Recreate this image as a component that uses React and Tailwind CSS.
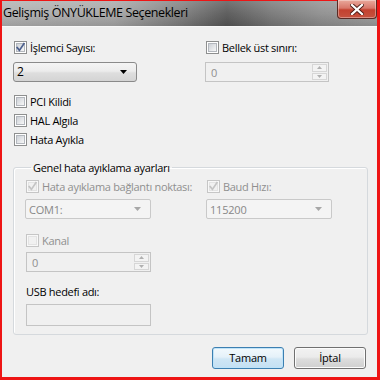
import React from "react";

const FONT = "font-['Open_Sans','Noto_Sans',sans-serif]";

function Check({ checked, disabled }) {
  return (
    <span
      className={
        disabled
          ? "flex w-[13px] h-[13px] shrink-0 items-center justify-center border border-[#c6c6c6] bg-[#f8f8f8]"
          : "flex w-[13px] h-[13px] shrink-0 items-center justify-center border border-[#8e8f8f] bg-white"
      }
    >
      <span
        className={
          disabled
            ? "relative flex w-[9px] h-[9px] border border-[#e3e3e3] bg-[#f1f1f1]"
            : "relative flex w-[9px] h-[9px] border border-[#b3b7bd] bg-[linear-gradient(135deg,#cdd1d7,#f7f7f7)]"
        }
      >
        {checked && (
          <svg
            width="11"
            height="11"
            viewBox="0 0 11 11"
            className="absolute left-[-2px] top-[-2px]"
          >
            <path
              d="M2.2 5.6 L4.4 8.4 L8.9 1.8"
              fill="none"
              stroke={disabled ? "#c4c4c4" : "#4b5f8d"}
              strokeWidth="1.7"
              strokeLinecap="square"
            />
          </svg>
        )}
      </span>
    </span>
  );
}

function CheckRow({ label, checked, disabled }) {
  return (
    <div className="flex h-[14px] items-center">
      <span className="ml-px">
        <Check checked={checked} disabled={disabled} />
      </span>
      <span
        className={
          disabled
            ? "ml-[3px] whitespace-nowrap text-[11px] leading-none tracking-[-0.3px] text-[#8f8f8f]"
            : "ml-[3px] whitespace-nowrap text-[11px] leading-none tracking-[-0.3px] text-black"
        }
      >
        {label}
      </span>
    </div>
  );
}

function Arrow({ disabled }) {
  return (
    <svg width="7" height="4" viewBox="0 0 7 4">
      <path d="M0 0 H7 L3.5 4 Z" fill={disabled ? "#a7a7a7" : "#000"} />
    </svg>
  );
}

function Combo({ value, disabled, width }) {
  return (
    <div
      className={
        disabled
          ? "flex h-[20px] items-center justify-between rounded-[2px] border border-[#c9c9c9] bg-[#f4f4f4] pl-[3px] pr-[9px] " + width
          : "flex h-[20px] items-center justify-between rounded-[3px] border border-[#8a8a8a] bg-[linear-gradient(#f4f4f4_0%,#ececec_45%,#dedede_55%,#d4d4d4_100%)] pl-[3px] pr-[9px] " + width
      }
    >
      <span
        className={
          disabled
            ? "text-[11px] leading-none tracking-[-0.2px] text-[#888888]"
            : "text-[12px] leading-none text-black"
        }
      >
        {value}
      </span>
      <Arrow disabled={disabled} />
    </div>
  );
}

function Spin({ width }) {
  return (
    <div
      className={
        "flex h-[20px] items-stretch border border-[#c4c4c4] bg-[#f0f0f0] " +
        width
      }
    >
      <div className="flex flex-1 items-center pl-[5px] text-[11px] leading-none text-[#8f8f8f]">
        0
      </div>
      <div className="flex w-[16px] flex-col gap-px py-px pr-px">
        <div className="flex flex-1 items-center justify-center border border-[#d6d6d6] bg-[#f3f3f3]">
          <svg width="5" height="3" viewBox="0 0 5 3">
            <path d="M0 3 L2.5 0 L5 3 Z" fill="#b0b0b0" />
          </svg>
        </div>
        <div className="flex flex-1 items-center justify-center border border-[#d6d6d6] bg-[#f3f3f3]">
          <svg width="5" height="3" viewBox="0 0 5 3">
            <path d="M0 0 L5 0 L2.5 3 Z" fill="#b0b0b0" />
          </svg>
        </div>
      </div>
    </div>
  );
}

function Button({ label, primary }) {
  return (
    <div
      className={
        primary
          ? "flex h-[22px] w-[72px] items-center justify-center rounded-[3px] border border-[#3c7fb1] bg-[linear-gradient(#f2f9fd_0%,#e5f1f9_45%,#cfe6f5_55%,#c4e0f3_100%)] shadow-[inset_0_0_0_1px_#bfe3f8] text-[11px] tracking-[-0.2px] text-black"
          : "flex h-[22px] w-[72px] items-center justify-center rounded-[3px] border border-[#707070] bg-[linear-gradient(#f2f2f2_0%,#ebebeb_45%,#dddddd_55%,#cfcfcf_100%)] shadow-[inset_0_0_0_1px_#fcfcfc] text-[11px] tracking-[-0.2px] text-black"
      }
    >
      {label}
    </div>
  );
}

export default function App() {
  return (
    <div
      className={
        "flex h-[380px] w-[380px] flex-col bg-[#ee1515] pt-px pl-[2px] pr-[3px] pb-[3px] " +
        FONT
      }
    >
      {/* Title bar */}
      <div className="relative flex h-[25px] shrink-0 items-center bg-[linear-gradient(90deg,#b0b0b0_0%,#a6a6a6_30%,#7c7c7c_48%,#575757_60%,#777777_72%,#8e8e8e_85%,#9c9c9c_100%)] pl-px">
        <div className="absolute inset-0 bg-[linear-gradient(180deg,rgba(255,255,255,0.18)_0%,rgba(255,255,255,0.05)_50%,rgba(0,0,0,0.1)_100%)]" />
        <span className="relative whitespace-nowrap text-[12.5px] leading-none tracking-[-0.4px] text-black">
          Gelişmiş ÖNYÜKLEME Seçenekleri
        </span>
        <div className="absolute right-0 top-[-1px] flex h-[19px] w-[40px] items-center justify-center rounded-b-[4px] border border-t-0 border-[#5a2a24] bg-[linear-gradient(#e9a99c_0%,#d8776a_45%,#c3412f_55%,#c6523f_100%)] shadow-[inset_0_0_0_1px_rgba(255,255,255,0.35)]">
          <svg width="14" height="11" viewBox="0 0 14 11">
            <path
              d="M2 1 L12 10 M12 1 L2 10"
              stroke="#4a1a14"
              strokeWidth="4"
              strokeLinecap="square"
            />
            <path
              d="M2 1 L12 10 M12 1 L2 10"
              stroke="#ffffff"
              strokeWidth="2.3"
              strokeLinecap="square"
            />
          </svg>
        </div>
      </div>
      <div className="h-px shrink-0 bg-[#f8f8f8]" />

      {/* Body */}
      <div className="flex flex-1 flex-col bg-[#f0f0f0] pl-[11px] pr-[9px]">
        <div className="mt-[13px] flex">
          <div className="flex w-[192px] flex-col">
            <CheckRow label="İşlemci Sayısı:" checked />
            <div className="mt-[8px]">
              <Combo value="2" width="w-[124px]" />
            </div>
          </div>
          <div className="flex flex-col">
            <CheckRow label="Bellek üst sınırı:" />
            <div className="mt-[8px]">
              <Spin width="w-[124px]" />
            </div>
          </div>
        </div>

        <div className="mt-[12px] flex flex-col gap-[5px]">
          <CheckRow label="PCI Kilidi" />
          <CheckRow label="HAL Algıla" />
          <CheckRow label="Hata Ayıkla" />
        </div>

        <fieldset className="mt-[14px] rounded-[3px] border border-[#d5d9dd] pl-[11px] pb-[8px] shadow-[inset_1px_1px_0_#ffffff]">
          <legend className="ml-[6px] px-[2px] text-[11px] leading-[15px] tracking-[-0.3px] text-black">
            Genel hata ayıklama ayarları
          </legend>
          <div className="mt-[4px] flex">
            <div className="flex w-[181px] flex-col">
              <CheckRow
                label="Hata ayıklama bağlantı noktası:"
                checked
                disabled
              />
              <div className="mt-[6px]">
                <Combo value="COM1:" disabled width="w-[126px]" />
              </div>
            </div>
            <div className="flex flex-col">
              <CheckRow label="Baud Hızı:" checked disabled />
              <div className="mt-[6px]">
                <Combo value="115200" disabled width="w-[126px]" />
              </div>
            </div>
          </div>
          <div className="mt-[14px]">
            <CheckRow label="Kanal" disabled />
          </div>
          <div className="mt-[5px] pl-px">
            <Spin width="w-[125px]" />
          </div>
          <div className="mt-[12px] flex h-[14px] items-center pl-px text-[11px] leading-none tracking-[-0.3px] text-black">
            USB hedefi adı:
          </div>
          <div className="mt-[6px] ml-px h-[22px] w-[125px] border border-[#c4c4c4] bg-[#f0f0f0]" />
        </fieldset>

        <div className="mt-[12px] flex justify-end gap-[10px] pr-[2px]">
          <Button label="Tamam" primary />
          <Button label="İptal" />
        </div>
      </div>
    </div>
  );
}
